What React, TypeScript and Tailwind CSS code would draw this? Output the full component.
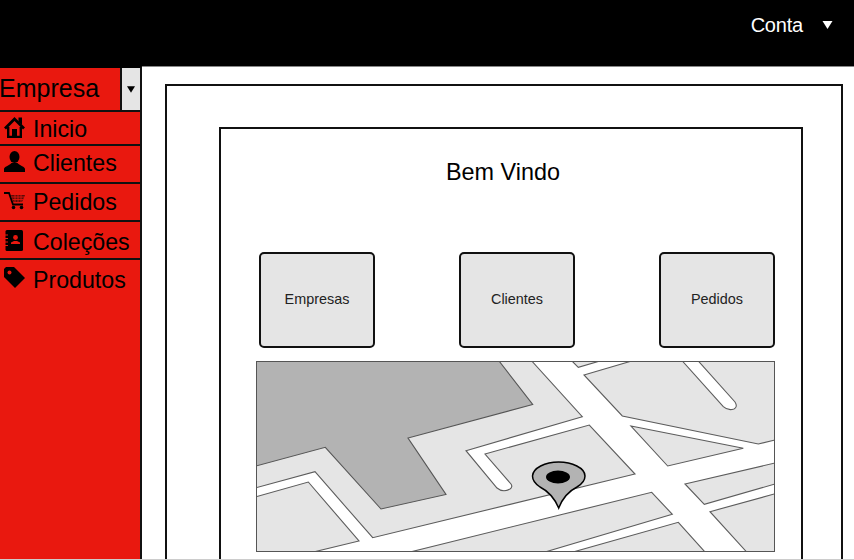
function HomeIcon() {
  return (
    <svg viewBox="0 0 21 21" className="w-[21px] h-[21px]">
      <path d="M1 11.5 L10.5 2 L20 11.5" fill="none" stroke="#000" strokeWidth="2.8" />
      <path d="M14.5 0.5 H18 V8 L14.5 4.5 Z" fill="#000" />
      <path d="M4.2 10 V20 H16.8 V10" fill="none" stroke="#000" strokeWidth="2.4" />
      <rect x="8" y="12" width="5" height="8" fill="#000" />
    </svg>
  );
}

function UserIcon() {
  return (
    <svg viewBox="0 0 21 21" className="w-[21px] h-[21px]">
      <ellipse cx="10.5" cy="6" rx="5" ry="6" fill="#000" />
      <path d="M0 21 V18 C0 15.5 5 15 7.5 12 H13.5 C16 15 21 15.5 21 18 V21 Z" fill="#000" />
    </svg>
  );
}

function CartIcon() {
  return (
    <svg viewBox="0 0 22 18" className="w-[22px] h-[18px]">
      <path d="M0 1 H5 L9 12.5 H19" fill="none" stroke="#000" strokeWidth="1.8" />
      <path d="M7 3 H21 L18 10 H9.5 Z" fill="#5a0c08" />
      <path d="M8 5 H20 M9 7.5 H19 M11 3 V10 M14 3 V10 M17 3 V10" stroke="#e9180f" strokeWidth="0.8" />
      <circle cx="9.5" cy="15.5" r="1.8" fill="#000" />
      <circle cx="17.5" cy="15.5" r="1.8" fill="#000" />
    </svg>
  );
}

function BookIcon() {
  return (
    <svg viewBox="0 0 19 21" className="w-[19px] h-[21px]">
      <rect x="1.5" y="0" width="17.5" height="21" rx="1.5" fill="#000" />
      <path d="M0 5 H4 M0 8.5 H4 M0 12 H4 M0 15.5 H4" stroke="#e9180f" strokeWidth="1.2" />
      <circle cx="11.5" cy="7.5" r="2.4" fill="#e9180f" />
      <path d="M7 14 V12.5 L10 11 H13 L16 12.5 V14 Z" fill="#e9180f" />
    </svg>
  );
}

function TagIcon() {
  return (
    <svg viewBox="0 0 21 21" className="w-[21px] h-[21px]">
      <path d="M0 2 L2 0 H10 L21 11 L11 21 L0 10 Z" fill="#000" />
      <circle cx="5.5" cy="5.5" r="2" fill="#e9180f" />
    </svg>
  );
}

function Caret({ className }: { className: string }) {
  return (
    <svg viewBox="0 0 10 8" className={className}>
      <path d="M0 0 H10 L5 8 Z" fill="currentColor" />
    </svg>
  );
}

function MapPicture() {
  const block = "fill-[#e5e5e5] stroke-[#5c5c5c] stroke-[1.1]";
  return (
    <svg viewBox="256 361 519 191" className="w-[519px] h-[191px] block bg-white">
      <path
        className={block}
        d="M256 361 H531.7 L582.3 416.7 L466 450.7 L497 488 Q503 493 510 489 Q513 487 511 484 L485 454 L589.3 425 L635 474 L372.7 537.7 L315 471.7 L256 487.7 Z"
      />
      <path
        className="fill-[#b3b3b3] stroke-[#555] stroke-[1.1]"
        d="M256 361 H499 L532.7 404.5 L408 438 L446 494.5 L381 509 L325.3 447.3 L256 466 Z"
      />
      <path className={block} d="M256 496.7 L308.3 482 L359 541 L313.3 552 H256 Z" />
      <path className={block} d="M410 552 L651.7 492.3 L672.3 514.3 L545 552 Z" />
      <path className={block} d="M573 552 L678.3 522.3 L705 552 Z" />
      <path className={block} d="M746.7 552 L710 511.7 L775 493.8 V552 Z" />
      <path className={block} d="M685 484 L775 463 V484 L704.3 504.3 Z" />
      <path className={block} d="M631 426 L743.3 448.3 L667.7 466 Z" />
      <path
        className={block}
        d="M584 375 L631.7 361 H682.3 L723.3 406.7 Q728 411 734 409 Q738 407 735 402 L698.3 361 H775 V440 L758.3 444 L622.3 416 Z"
      />
      <path className={block} d="M572 361 L578.3 367.3 L600 361 Z" />
      {/* map pin */}
      <path
        d="M558.7 508 C554 497 548 491 540 487 C534 483 532.5 480 532.5 476 C533 468 545 462 558.7 462 C572 462 585 468 585 476 C585 481 582 484 577 487 C569 491 563 497 558.7 508 Z"
        fill="#b3b3b3"
        stroke="#000"
        strokeWidth="1.5"
      />
      <ellipse cx="558" cy="477" rx="12" ry="6.5" fill="#000" />
      <rect x="256.5" y="361.5" width="518" height="190" fill="none" stroke="#555" />
    </svg>
  );
}

const menu = [
  { label: "Inicio", icon: <HomeIcon />, row: "h-[34px]", iconTop: "pt-[5px]", textTop: "pt-[3px]" },
  { label: "Clientes", icon: <UserIcon />, row: "h-[38px]", iconTop: "pt-[5px]", textTop: "pt-[3px]" },
  { label: "Pedidos", icon: <CartIcon />, row: "h-[38px]", iconTop: "pt-[8px]", textTop: "pt-[4px]" },
  { label: "Coleções", icon: <BookIcon />, row: "h-[38px]", iconTop: "pt-[8px]", textTop: "pt-[6px]" },
  { label: "Produtos", icon: <TagIcon />, row: "h-[38px]", iconTop: "pt-[7px]", textTop: "pt-[6px]" },
];

const shortcuts = ["Empresas", "Clientes", "Pedidos"];

export default function App() {
  return (
    <div className="w-[854px] h-[560px] overflow-hidden flex flex-col bg-white text-black font-['Liberation_Sans',Arial,sans-serif]">
      {/* top bar */}
      <header className="h-[67px] shrink-0 bg-black border-b border-[#888] flex justify-end pt-[13px] pr-[21px] text-white">
        <span className="text-[20px] leading-[24px] tracking-[-0.2px]">Conta</span>
        <Caret className="w-[11px] h-[8px] ml-[19px] mt-[8px] text-white" />
      </header>

      <div className="flex-1 min-h-0 flex">
        {/* sidebar */}
        <aside className="w-[142px] shrink-0 -mt-px bg-[#e9180f] border-t-2 border-t-black border-r-2 border-r-[#111]">
          <div className="h-[44px] flex border-b-2 border-[#111]">
            <span className="flex-1 pt-[5px] -ml-px text-[25px] leading-[30px]">Empresa</span>
            <div className="w-[20px] bg-[#e5e5e5] border-l-2 border-[#111] flex items-center justify-center">
              <Caret className="w-[8px] h-[7px] text-black" />
            </div>
          </div>
          {menu.map((item) => (
            <div key={item.label} className={`${item.row} flex border-b-2 border-[#111] last:border-b-0`}>
              <div className={`${item.iconTop} w-[33px] shrink-0 pl-[4px]`}>{item.icon}</div>
              <span className={`${item.textTop} text-[23.2px] leading-[28px] whitespace-nowrap`}>{item.label}</span>
            </div>
          ))}
        </aside>

        {/* content */}
        <main className="flex-1 pl-[23px] pt-[17px] pr-[12px]">
          <div className="h-[600px] border-2 border-[#111] pl-[52px] pt-[41px] pr-[38px]">
            <div className="h-[600px] border-2 border-[#111] pr-[26px]">
              <h1 className="pl-[225px] pt-[29px] text-[23.4px] leading-[28px] font-normal">Bem Vindo</h1>
              <div className="flex justify-between pl-[38px] mt-[66px]">
                {shortcuts.map((name) => (
                  <div
                    key={name}
                    className="w-[116px] h-[96px] bg-[#e5e5e5] border-2 border-[#111] rounded-[5px] flex items-center justify-center text-[14.4px] text-[#222]"
                  >
                    {name}
                  </div>
                ))}
              </div>
              <div className="ml-[35px] mt-[13px]">
                <MapPicture />
              </div>
            </div>
          </div>
        </main>
      </div>
      <div className="h-px shrink-0 bg-[#ccc]" />
    </div>
  );
}
